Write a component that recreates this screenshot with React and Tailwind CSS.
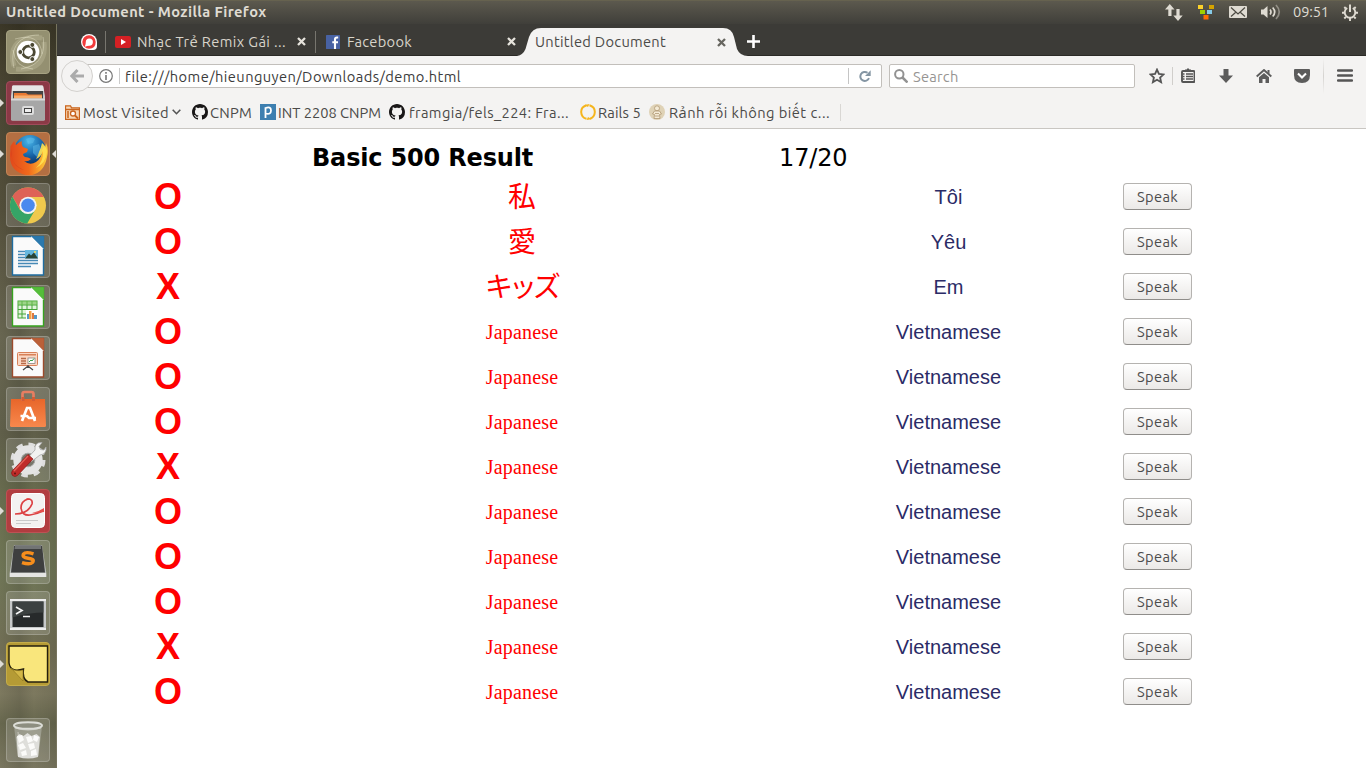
import React, { useLayoutEffect, useRef } from "react";

/* One line of text whose letter spacing is adjusted to fill a given width. */
function Fit({ w, className = "", children }) {
  const ref = useRef(null);
  useLayoutEffect(() => {
    const el = ref.current;
    el.style.letterSpacing = "0px";
    const natural = el.getBoundingClientRect().width;
    const n = Array.from(el.textContent.normalize("NFC")).length;
    el.style.letterSpacing = (w - natural) / n + "px";
  }, [w, children]);
  return (
    <span className={"block shrink-0 whitespace-nowrap " + className} style={{ width: w }}>
      <span ref={ref} className="inline-block">{children}</span>
    </span>
  );
}

const UI = "font-['Ubuntu','Open_Sans','Noto_Sans',sans-serif]";

function TitleBar() {
  return (
    <header className="flex h-6 shrink-0 items-center border-t border-[#66624f] bg-linear-to-b from-[#5c594e] to-[#403f3a] text-[#dfdbd2]">
      <Fit w={260.5} className="ml-1.5 text-[14.67px] font-bold leading-none">Untitled Document - Mozilla Firefox</Fit>
      <svg className="ml-[898.5px] h-[18px] w-[18px] shrink-0" viewBox="0 0 18 18" fill="#dfdbd2">
        <path d="M4.800 0 9.500 5.500H6.500V12H3.300V5.500H0zM13 17 8.300 11.500h3.100V5h3.200v6.500h3.100z" />
      </svg>
      <svg className="ml-[15px] h-[18px] w-4 shrink-0" viewBox="0 0 16 18">
        <rect x="0" y="1" width="5" height="4" fill="#fcd12a" />
        <rect x="11" y="1" width="5" height="4" fill="#d5a300" />
        <rect x="2" y="6" width="5" height="4" fill="#9fd000" />
        <rect x="9" y="6" width="5" height="4" fill="#86cbe8" />
        <rect x="5.500" y="11" width="5" height="4.500" fill="#ff6a00" />
      </svg>
      <svg className="-mt-px ml-[15px] h-3 w-[18px] shrink-0" viewBox="0 0 18 12">
        <rect width="18" height="12" rx="1" fill="#dfdbd2" />
        <path d="M2 1.500 9 8l7-6.500M2 10.500l4.500-4M16 10.500l-4.500-4" fill="none" stroke="#4b4941" strokeWidth="1.200" />
      </svg>
      <svg className="-mt-px ml-3.5 h-4 w-5 shrink-0" viewBox="0 0 20 16" fill="none" stroke="#dfdbd2">
        <path d="M0 5.500h2.500L6.500 2v12l-4-3.500H0z" fill="#dfdbd2" stroke="none" />
        <path d="M9 5.500q2 2.500 0 5M11.700 3.500q4 4.500 0 9" strokeWidth="1.700" />
        <path d="M15 1q6.500 7 0 14" strokeWidth="1.700" opacity=".45" />
      </svg>
      <Fit w={36} className="ml-3 text-[14.67px] leading-none">09:51</Fit>
      <svg className="-mt-px ml-[13px] h-[17px] w-4 shrink-0" viewBox="0 0 16 17" fill="none" stroke="#dfdbd2">
        <path d="M5.200 4a5.300 5.300 0 1 0 5.600 0" strokeWidth="1.900" />
        <path d="M8 .5v7.500" strokeWidth="2" />
        <path d="M0 8.700h2.500M13.500 8.700H16M8 14v3M2.300 14.500l1.600-1.700M13.700 14.500l-1.600-1.700M2.300 3l1.500 1.500M13.700 3l-1.500 1.500" strokeWidth="1.900" />
      </svg>
    </header>
  );
}

/* ---------- Launcher ---------- */

const OfficePage = ({ color, corner, children }) => (
  <svg viewBox="0 0 44 44" className="h-11 w-11">
    <path d="M6.500 2.500h20l11 11.500v27h-31z" fill="#fafafa" stroke={color} strokeWidth="1.400" />
    <path d="M25 2h13v13z" fill={corner} stroke={color} strokeWidth=".4" />
    <path d="M25 2v2l11 11h2z" fill="#fff" opacity=".6" />
    {children}
  </svg>
);

const icons = {
  dash: (
    <svg viewBox="0 0 44 44" className="h-11 w-11">
      <g fill="none" stroke="#e2dfc0" strokeWidth="5" opacity=".22">
        <path d="M8 36C2 16 14 4 36 8M38 12c2 18-6 29-28 27" />
      </g>
      <g fill="none" stroke="#f3f0d8" strokeWidth="1" opacity=".4">
        <path d="M8 38C3 17 14 5 33 5M37 7c3 17-4 29-22 32M9 9Q34 2 36 24M7 20q2 18 20 19" />
      </g>
      <circle cx="22" cy="22" r="11.300" fill="#fff" />
      <circle cx="22.500" cy="22" r="5.800" fill="none" stroke="#4b4833" strokeWidth="2.800" />
      <g fill="#4b4833" stroke="#fff" strokeWidth="1"><circle cx="14.300" cy="22" r="2.500" /><circle cx="26.300" cy="14.900" r="2.500" /><circle cx="26.300" cy="29.100" r="2.500" /></g>
    </svg>
  ),
  files: (
    <svg viewBox="0 0 44 44" className="h-11 w-11">
      <path d="M7 4.500h29q1 0 1.200 1L39 15v23q0 1.500-1.500 1.500h-31Q5 39.500 5 38V15l1-9.500q0-1 1-1z" fill="#c9c9c9" />
      <path d="M7 4.500h29q1 0 1.200 1L38 10H6l.2-4.500z" fill="#e6e6e6" />
      <path d="M7 10h30v8H7z" fill="#444" />
      <path d="M8 12h12l2 1.500h14V19H8z" fill="#e87932" /><path d="M8 14.500h28V19H8z" fill="#f6ad6d" />
      <path d="M5 17.500h34V38q0 1.500-1.500 1.500h-31Q5 39.500 5 38z" fill="#a7a7a7" />
      <path d="M5 17.500h34v2H5z" fill="#d9d9d9" />
      <rect x="16" y="25" width="12" height="9" rx="2" fill="#ddd" /><rect x="18.500" y="27.500" width="7" height="4" fill="#eee" stroke="#444" />
    </svg>
  ),
  firefox: (
    <svg viewBox="0 0 44 44" className="h-11 w-11">
      <defs>
        <radialGradient id="globe" cx=".45" cy=".2" r=".8"><stop stopColor="#48b5e8" /><stop offset=".55" stopColor="#1664a8" /><stop offset="1" stopColor="#0a2656" /></radialGradient>
        <linearGradient id="fox" x1="0" x2="1"><stop stopColor="#e0491c" /><stop offset=".5" stopColor="#f26a1c" /><stop offset="1" stopColor="#fdd13a" /></linearGradient>
      </defs>
      <circle cx="24" cy="19" r="16" fill="url(#globe)" />
      <path d="M20 7q5-3 9 0l-2 4-5 1zM27 14l6-2 3 8-5 5-4-4z" fill="#62bde9" opacity=".5" />
      <path d="M4.500 14Q6 12 8 9l2 4q3-3 6-4-1 3 1 6l5 2-1 3-4 2q0 2 2 3 3 0 6 2-3 3-7 2 6 5 12 1 6-4 6-12l2-4 1 2 1-5q3 6 1 14-3 17-18 18.500Q3 41 4 22z" fill="url(#fox)" />
      <path d="M36 11q-1 5-3 9-1 4-3 7 5-2 7-8 1 10-7 17 10-5 11-16 0-5-5-9z" fill="#ffe052" opacity=".9" />
      <path d="M6 17Q3 32 18 38 9 36 6 26z" fill="#cc3321" opacity=".45" />
    </svg>
  ),
  chrome: (
    <svg viewBox="0 0 44 44" className="h-11 w-11">
      <circle cx="22" cy="22.500" r="18" fill="#efc94d" />
      <path d="M22 4.500A18 18 0 0 0 6.400 13.500l8 13.500L22 14h15.800A18 18 0 0 0 22 4.500z" fill="#de6257" />
      <path d="M6.400 13.500a18 18 0 0 0 14.800 27L29 27l-7 4-8-4z" fill="#36a467" />
      <circle cx="22" cy="22.300" r="8.600" fill="#f3f3f3" /><circle cx="22" cy="22.300" r="6.800" fill="#4a89ee" />
    </svg>
  ),
  writer: (
    <OfficePage color="#1e6ca0" corner="#2b79ad">
      <path d="M12 17.500h7M12 20.500h7M12 23.500h7M12 26.500h20M12 29.500h20M12 32.500h13" stroke="#4689b6" strokeWidth="1.500" />
      <rect x="19" y="16" width="13" height="8.500" fill="#65b7de" /><path d="m19 24.500 4-5 2 2 3-3 4 6z" fill="#294537" /><circle cx="29" cy="18" r="1" fill="#ffe35b" />
    </OfficePage>
  ),
  calc: (
    <OfficePage color="#36a31e" corner="#55bd3a">
      <rect x="12" y="16" width="19" height="17" fill="#e2f4dc" stroke="#45a438" />
      <path d="M12 20h19M12 24.500h19M12 29h19M16 16v17M21 16v17M26 16v17" stroke="#45a438" /><path d="M12 16h19v4H12z" fill="#6fc052" opacity=".6" />
      <path d="M20 25h12v9H20z" fill="#fff" /><path d="M21 29h2v5h-2zM28 30h3v4h-3z" fill="#5599c7" /><path d="M23 26h2.500v8H23z" fill="#f4a147" /><path d="M26 28h2v6h-2z" fill="#de7940" />
    </OfficePage>
  ),
  impress: (
    <OfficePage color="#9c4a2b" corner="#bb6038">
      <rect x="11.500" y="16.500" width="20" height="13" rx="1" fill="#fbd7c3" stroke="#d88158" />
      <path d="M13 18.800h17" stroke="#d88158" strokeWidth="1.500" /><path d="M15 22.500h5M15 25h5M15 27.500h5" stroke="#b76a48" strokeWidth="1.500" />
      <rect x="22" y="22" width="7" height="5.500" fill="#fff" stroke="#777" strokeWidth=".7" /><path d="m23 26 2-2 1 1 2-2.500" stroke="#37a348" fill="none" />
      <path d="m17 34 5-4 5 4M22 29v3" stroke="#484848" strokeWidth="1.300" fill="none" />
    </OfficePage>
  ),
  store: (
    <svg viewBox="0 0 44 44" className="h-11 w-11">
      <defs><linearGradient id="bag" x2="0" y2="1"><stop stopColor="#e8662a" /><stop offset="1" stopColor="#f7884d" /></linearGradient></defs>
      <path d="M5 12h34l1 26.500q0 1.500-1.500 1.500h-33Q4 40 4 38.500z" fill="url(#bag)" />
      <path d="M16.500 14V7q0-2 2-2h7q2 0 2 2v7" fill="none" stroke="#e77e61" strokeWidth="2.700" />
      <path d="M15.500 10h3v4h-3zM26 10h3v4h-3z" fill="#d25d35" />
      <path d="m16 34 5-13h3l5 13M14.500 29H21l2 2h7" fill="none" stroke="#fff" strokeWidth="2.700" />
    </svg>
  ),
  settings: (
    <svg viewBox="0 0 44 44" className="h-11 w-11">
      <circle cx="22" cy="22" r="15" fill="none" stroke="#dedede" strokeWidth="5" strokeDasharray="6.200 5.580" />
      <circle cx="22" cy="22" r="10.700" fill="none" stroke="#e4e4e4" strokeWidth="8" />
      <circle cx="22" cy="22" r="6.800" fill="#77766a" stroke="#aaa" />
      <path d="M22 19.500 29 12q-1-8 7-7.500l-3 4 1.500 3 3.500.5 2-3q1 7-6 8l-8.500 6.500z" fill="#f2f2f2" stroke="#a7a7a7" strokeWidth=".8" />
      <path d="M22 16.500 27 21 11.500 37.500q-2.500 2-5 0-2-2.500 0-5z" fill="#bf2b29" stroke="#8d1717" strokeWidth=".7" /><path d="M22 18 8 33" stroke="#e26258" strokeWidth="1.300" />
      <circle cx="9" cy="35.500" r="1" fill="#5d1514" />
    </svg>
  ),
  reader: (
    <svg viewBox="0 0 44 44" className="h-11 w-11">
      <rect x="5.500" y="4.500" width="33" height="34" rx="4" fill="#f3f2f1" stroke="#fff" />
      <path d="M9 25q13 0 17-10 1-5-4-5-7 2-7 9 1 8 9 7 7-1 14-4.500" fill="none" stroke="#dc4143" strokeWidth="1.700" />
      <path d="M17 13q4-6 8-3-5-1-8 3zM26 24q6-1 12-5v4q-6 1-12 1z" fill="#e6504d" />
      <path d="M10 31.500h22M10 34.500h15" stroke="#c9c9c9" strokeWidth="1" />
    </svg>
  ),
  sublime: (
    <svg viewBox="0 0 44 44" className="h-11 w-11">
      <path d="M8 5h28l4.500 29v3H3.500v-3z" fill="#b9bcb9" /><path d="M4 33h36v4H4z" fill="#e5e5e3" />
      <path d="M9 5.500h26q1 0 1.200 1.200L39 32.500H5L7.800 6.700Q8 5.500 9 5.500z" fill="#3e3f3f" /><path d="M9 6h26v3H8.500z" fill="#727474" />
      <path d="M27.500 13.800q-8-2.500-10 .2-1.700 3.500 4.500 4.200 7 .8 4.500 4.200-2.500 2.700-10.500.2" fill="none" stroke="#f68d1c" strokeWidth="3.500" />
    </svg>
  ),
  terminal: (
    <svg viewBox="0 0 44 44" className="h-11 w-11">
      <path d="M4 8h36v31H4z" fill="#c6c8c9" /><path d="M4 8h36v2H4zM4 37h36v2H4z" fill="#ededed" />
      <path d="M6.500 10.500h31V36h-31z" fill="#272a2b" /><path d="M6.500 10.500h31v11q-14 0-31 5z" fill="#444949" opacity=".75" />
      <path d="m10 16 6 3.500-6 3.500M17 25.500h7" fill="none" stroke="#f4f4f4" strokeWidth="1.700" />
    </svg>
  ),
  notes: (
    <svg viewBox="0 0 44 44" className="h-11 w-11">
      <path d="M3 4h38v36H21q-4-3-4-13l-7 1q-6 0-7-8z" fill="#f9e67c" />
      <path d="M3 4h38.500v36H22q-6-3-4.500-13-13 4-14.500-6z" fill="none" stroke="#241f0e" strokeWidth="1.400" />
      <path d="M5 26 17 39V28q-8 2-12-2z" fill="#d3b747" stroke="#8a731c" strokeWidth=".6" />
    </svg>
  ),
  trash: (
    <svg viewBox="0 0 44 44" className="h-11 w-11">
      <path d="m8 8 3.500 30q10.500 3 21 0L36 8z" fill="#c4c6bc" opacity=".45" />
      <path d="m10.500 19 3-3 4 2 4-3 4 3 5-2 3.500 3-2 20q-10 3-20 0z" fill="#dededa" />
      <path d="m11 18 5-1 2 5-5 3zm9 1 5-1 2 5-5 2zm8-2 5 2-2 5-4-2zM12 27l5-2 3 5-6 2zm10-1 6-1 1 5-5 2zm-7 8 5-2 1 5-5 1zm10-1 5-2 1 6-6 1z" fill="#fbfbf9" />
      <ellipse cx="22" cy="7.500" rx="14" ry="3.300" fill="#8d8e80" stroke="#dcddd7" strokeWidth="1.900" />
      <path d="M9 10q13 4 26 0" stroke="#dcddd7" fill="none" opacity=".7" />
      <path d="M12 14 14 35" stroke="#f4f4ef" opacity=".5" />
    </svg>
  ),
};

const GLASS = "border-white/20 bg-white/15";
const launcherItems = [
  { id: "dash", tile: "border-[#a6a282] bg-[#949071]" },
  { id: "files", tile: "border-[#a04b5b] bg-[#8b3946]", left: true },
  { id: "firefox", tile: "border-[#c28557] bg-[#b36f42]", left: true, right: true },
  { id: "chrome", tile: GLASS },
  { id: "writer", tile: GLASS },
  { id: "calc", tile: GLASS },
  { id: "impress", tile: GLASS },
  { id: "store", tile: GLASS },
  { id: "settings", tile: GLASS },
  { id: "reader", tile: "border-[#bd5255] bg-[#b13d40]", left: true },
  { id: "sublime", tile: GLASS },
  { id: "terminal", tile: GLASS },
  { id: "notes", tile: "border-[#c5ad4a] bg-[#b59b35]", left: true },
];

function Tile({ id, tile, left, right }) {
  return (
    <div className="relative flex h-11 w-full shrink-0 pl-1.5">
      <div className={"flex h-11 w-11 shrink-0 items-center justify-center overflow-hidden rounded-[4px] border " + tile}>
        <span className="h-11 w-11 shrink-0">{icons[id]}</span>
      </div>
      {left && <svg className="absolute top-[18px] left-0 h-2 w-1" viewBox="0 0 4 8"><path d="M0 0 4 4 0 8z" fill="#dedcd6" /></svg>}
      {right && <svg className="absolute top-[18px] right-0 h-2 w-1" viewBox="0 0 4 8"><path d="M4 0 0 4l4 4z" fill="#dedcd6" /></svg>}
    </div>
  );
}

function Launcher() {
  return (
    <nav className="flex w-[57px] shrink-0 flex-col gap-[7px] border-r border-[#77745e] bg-[linear-gradient(90deg,transparent_0%,rgba(0,0,0,0.10)_35%,transparent_60%,rgba(0,0,0,0.08)_100%),linear-gradient(180deg,#3b3727_0%,#494532_8%,#534f3b_25%,#686651_42%,#605f4a_55%,#6b7050_66%,#6f7556_74%,#716e55_84%,#7d795f_90%,#67674e_94%,#7a7760_100%)] pt-1.5 pb-1.5">
      {launcherItems.map((item) => <Tile key={item.id} {...item} />)}
      <div className="mt-auto"><Tile id="trash" tile={GLASS} /></div>
    </nav>
  );
}

/* ---------- Browser chrome ---------- */

const CloseX = ({ className, color }) => (
  <svg className={"h-[9px] w-[9px] shrink-0 " + className} viewBox="0 0 9 9"><path d="m1 1 7 7M8 1 1 8" stroke={color} strokeWidth="2.300" /></svg>
);

function TabBar() {
  return (
    <div className="flex h-8 shrink-0 items-center border-b border-[#2b2a26] bg-[#3c3b37] pt-1 text-[14.67px] leading-none text-[#d8d4ca]">
      <svg className="mt-[1px] ml-6 h-4 w-4 shrink-0" viewBox="0 0 16 16">
        <path d="M8 0a8 8 0 0 1 8 8v4q0 4-4 4H8A8 8 0 0 1 8 0z" fill="#fff" />
        <path d="M8 1.300A6.700 6.700 0 0 1 14.700 8q0 6.700-6.700 6.700A6.700 6.700 0 0 1 8 1.300z" fill="#f23b3b" />
        <path d="M8.300 4.500a3.600 3.600 0 0 1 0 7.200q-2 0-4.500 1 1-2 1-4.600a3.600 3.600 0 0 1 3.500-3.600z" fill="#fff" />
      </svg>
      <div className="ml-2 h-[22px] w-px shrink-0 bg-[#77756e]" />
      <svg className="ml-[9px] h-3 w-4 shrink-0" viewBox="0 0 16 12"><rect width="16" height="12" rx="2" fill="#d52024" /><path d="m6 3 5 3-5 3z" fill="#fff" /></svg>
      <Fit w={149} className="ml-1.5 pt-px">Nhạc Trẻ Remix Gái ...</Fit>
      <CloseX className="ml-[10.5px]" color="#e6e3dc" />
      <div className="ml-[9.5px] h-[22px] w-px shrink-0 bg-[#77756e]" />
      <svg className="ml-2.5 h-3.5 w-3.5 shrink-0" viewBox="0 0 14 14"><rect width="14" height="14" rx=".5" fill="#4862a3" /><path d="M12.200 2.500H11q-2 0-2 2V14M6.300 7.300H12" stroke="#fff" strokeWidth="2.100" fill="none" /></svg>
      <Fit w={65} className="ml-[7px] pt-px">Facebook</Fit>
      <CloseX className="ml-[94.500px]" color="#e6e3dc" />
      <div className="relative -mt-1 ml-[1.5px] flex h-8 w-[230px] shrink-0 items-center self-start pt-[5px] pl-[18px] text-[#4b4a47]">
        <svg className="absolute inset-0 h-8 w-[231px]" viewBox="0 0 231 32"><path d="M0 32q6-1 8.500-7L12 13q3-9 12-9h182q9 0 11 9l3 12q3 7 11 7z" fill="#f4f3f2" /></svg>
        <Fit w={131} className="relative">Untitled Document</Fit>
        <CloseX className="relative ml-[50.5px]" color="#66655f" />
      </div>
      <svg className="h-[13px] w-[13px] shrink-0" viewBox="0 0 13 13"><path d="M6.500 0v13M0 6.500h13" stroke="#fff" strokeWidth="2.600" /></svg>
    </div>
  );
}

function NavBar() {
  return (
    <div className="flex h-10 shrink-0 items-center text-[14.67px] leading-none">
      <div className="z-10 ml-1 flex h-8 w-8 shrink-0 items-center justify-center rounded-full border border-[#d3d1ce] bg-[#f4f3f2]">
        <svg className="h-3.5 w-3.5" viewBox="0 0 14 14"><path d="M7.500 1 1.800 7l5.700 6M2 7h12" fill="none" stroke="#ababab" strokeWidth="3" /></svg>
      </div>
      <div className="-ml-3 flex h-6 w-[801px] shrink-0 items-center rounded-[2px] border border-[#c2bfbb] bg-white">
        <svg className="ml-[17px] h-3.5 w-3.5 shrink-0" viewBox="0 0 14 14" fill="none" stroke="#777"><circle cx="7" cy="7" r="6.300" strokeWidth="1.200" /><path d="M7 6v5M7 3v1.700" strokeWidth="1.600" /></svg>
        <div className="ml-[6px] h-4 w-px bg-[#cbcbcb]" />
        <Fit w={335.500} className="ml-[5px] pt-[2px] text-[#3b3b3b]">file:///home/hieunguyen/Downloads/demo.html</Fit>
        <div className="ml-[387.500px] h-4 w-px bg-[#c5c5c5]" />
        <svg className="ml-2.5 h-3 w-3 shrink-0" viewBox="0 0 12 12"><path d="M10 8.200A4.500 4.500 0 1 1 8.500 2.800" fill="none" stroke="#8495a3" strokeWidth="2" /><path d="M11.700.2V6H6z" fill="#8495a3" /></svg>
      </div>
      <div className="ml-[7px] flex h-6 w-[246px] shrink-0 items-center rounded-[2px] border border-[#c2bfbb] bg-white">
        <svg className="ml-1 h-3.5 w-3.5 shrink-0" viewBox="0 0 14 14" fill="none" stroke="#929292"><circle cx="5.300" cy="5.300" r="4.200" strokeWidth="2" /><path d="m8.500 8.500 5 5" strokeWidth="2.500" /></svg>
        <Fit w={45.500} className="ml-[5px] pt-[2px] text-[#969492]">Search</Fit>
      </div>
      <svg className="ml-3.5 h-4 w-4 shrink-0" viewBox="0 0 16 16"><path d="m8 1.600 1.900 4.300 4.700.5-3.500 3.100 1 4.700L8 11.800l-4.100 2.400 1-4.700-3.500-3.100 4.700-.5z" fill="none" stroke="#555" strokeWidth="1.800" /></svg>
      <div className="ml-[7px] h-[18px] w-px bg-[#d0cecb]" />
      <svg className="-mt-px ml-2 h-[15px] w-3.5 shrink-0" viewBox="0 0 14 15"><path d="M4 2.500V1.500h1.500L7 0l1.500 1.500H10v1" fill="#555" /><rect x="1" y="3" width="12.500" height="11" rx="1" fill="#f4f3f2" stroke="#555" strokeWidth="1.900" /><path d="M2 6h1.500M5 6h7M2 8.500h1.500M5 8.500h7M2 11h1.500M5 11h7" stroke="#555" strokeWidth="1.300" /></svg>
      <svg className="ml-6 h-3.5 w-3.5 shrink-0" viewBox="0 0 14 14"><path d="M4.500 0h5v6.500H14L7 14 0 6.500h4.500z" fill="#5c5c5c" /></svg>
      <svg className="ml-[23px] h-3.5 w-4 shrink-0" viewBox="0 0 16 14"><path d="M.7 7.500 8 1l7.300 6.500" fill="none" stroke="#5c5c5c" strokeWidth="1.900" /><path d="M3 8.200 8 4l5 4.200V14H9.500v-4h-3v4H3zM11.500 1h2v4l-2-2z" fill="#5c5c5c" /></svg>
      <svg className="ml-[22px] h-3.5 w-4 shrink-0" viewBox="0 0 16 14"><path d="M1 0h14q1 0 1 1v5q0 8-8 8T0 6V1q0-1 1-1z" fill="#5c5c5c" /><path d="m4 4.500 4 4 4-4" fill="none" stroke="#fff" strokeWidth="2.100" /></svg>
      <div className="ml-[13px] h-9 w-px bg-linear-to-b from-transparent via-[#d5d3d0] to-transparent" />
      <svg className="-mt-px ml-[13px] h-[13px] w-4 shrink-0" viewBox="0 0 16 13"><path d="M1 1.500h14M1 6.500h14M1 11.500h14" stroke="#555" strokeWidth="2.400" strokeLinecap="round" /></svg>
    </div>
  );
}

const GitHubMark = ({ className }) => (
  <svg className={"h-4 w-4 shrink-0 " + className} viewBox="0 0 16 16"><path fill="#191717" d="M8 0C3.580 0 0 3.580 0 8c0 3.540 2.290 6.530 5.470 7.590.4.070.55-.17.55-.38 0-.19-.01-.82-.01-1.490-2.010.37-2.530-.49-2.690-.94-.09-.23-.48-.94-.82-1.130-.28-.15-.68-.52-.01-.53.63-.01 1.080.58 1.230.82.72 1.210 1.870.87 2.330.66.070-.52.28-.87.51-1.070-1.780-.2-3.640-.89-3.640-3.950 0-.87.31-1.590.82-2.150-.08-.2-.36-1.020.08-2.120 0 0 .67-.21 2.200.82.64-.18 1.320-.27 2-.27s1.360.09 2 .27c1.530-1.040 2.200-.82 2.200-.82.44 1.100.16 1.920.08 2.120.51.56.82 1.270.82 2.150 0 3.070-1.870 3.750-3.650 3.950.29.25.54.73.54 1.480 0 1.070-.01 1.930-.01 2.200 0 .21.15.46.55.38A8.010 8.010 0 0 0 16 8c0-4.420-3.580-8-8-8z" /></svg>
);

function Bookmarks() {
  return (
    <div className="flex h-8 shrink-0 items-center text-[14.67px] leading-none text-[#4b4a48]">
      <svg className="ml-2 h-[15px] w-[15px] shrink-0" viewBox="0 0 15 15"><path d="M.5.800h5l1 2h8v11.700H.5z" fill="#f7d8b7" stroke="#c9641d" strokeWidth="1.300" /><path d="M1 4.500h13M3 6v7" stroke="#c9641d" strokeWidth="1.500" /><circle cx="8" cy="8.500" r="2.500" fill="#fff" stroke="#c9641d" strokeWidth="1.300" /><path d="m10 10.500 3 3" stroke="#c9641d" strokeWidth="1.800" /></svg>
      <Fit w={86} className="ml-[3px] pt-[2px]">Most Visited</Fit>
      <svg className="ml-[3px] h-[6px] w-[9px] shrink-0" viewBox="0 0 9 6"><path d="m.7.700 3.800 4 3.800-4" fill="none" stroke="#555" strokeWidth="1.600" /></svg>
      <GitHubMark className="ml-[11px]" />
      <Fit w={42} className="ml-[2px] pt-[2px]">CNPM</Fit>
      <svg className="ml-2 h-4 w-4 shrink-0" viewBox="0 0 16 16"><rect width="16" height="16" fill="#3d7fb0" /><path d="M5.500 14V4q5.500-2 5.500 2.500T5.500 9.500" fill="none" stroke="#fff" strokeWidth="1.800" /></svg>
      <Fit w={103} className="ml-[2px] pt-[2px]">INT 2208 CNPM</Fit>
      <GitHubMark className="ml-2" />
      <Fit w={160} className="ml-1 pt-[2px]">framgia/fels_224: Fra...</Fit>
      <svg className="ml-[11px] h-4 w-4 shrink-0" viewBox="0 0 16 16"><path d="M6.500 1.300Q1 3 1.200 8.200 1.500 13.500 6.500 14.800M9.500 1.300Q15 3 14.800 8.200 14.500 13 10 14.700" fill="none" stroke="#f5b51e" strokeWidth="2" /><path d="M4.500 1 9.500 0 8 3zM11.500 15.300 6.500 16 8 13z" fill="#f5b51e" /></svg>
      <Fit w={43} className="ml-[2px] pt-[2px]">Rails 5</Fit>
      <svg className="ml-2 h-4 w-4 shrink-0" viewBox="0 0 16 16"><circle cx="8" cy="8" r="8" fill="#dfd2b6" /><g fill="#f4ead5" stroke="#b09874" strokeWidth=".8"><circle cx="8" cy="4.300" r="2.500" /><path d="M5.500 7h5l2 3-2 .5.5 4H5l.5-4-2-.5z" /><path d="M6 9.500h4M6 12h4" /></g></svg>
      <Fit w={161} className="ml-1 pt-[2px]">Rảnh rỗi không biết c...</Fit>
      <div className="ml-2.5 h-[17px] w-px bg-[#d9d7d4]" />
    </div>
  );
}

/* ---------- Page ---------- */

const rows = [
  ["O", "私", "Tôi"],
  ["O", "愛", "Yêu"],
  ["X", "キッズ", "Em"],
  ...["O", "O", "O", "X", "O", "O", "O", "X", "O"].map((m) => [m, "Japanese", "Vietnamese"]),
];

function Japanese({ text }) {
  if (text === "Japanese") {
    return (
      <span className="flex justify-center pt-[2px] font-['Liberation_Serif',serif] text-[20px] leading-[45px] text-[#f00]">
        <Fit w={72.500}>{text}</Fit>
      </span>
    );
  }
  return (
    <span className="flex h-[45px] justify-center font-['Noto_Sans_CJK_JP',sans-serif] text-[28px] leading-[43px] text-[#f00]">
      {text.length > 1 ? <Fit w={72} className="-ml-0.5 leading-[42px]">{text}</Fit> : text}
    </span>
  );
}

function Page() {
  return (
    <main className="flex flex-1 flex-col overflow-hidden bg-white">
      <div className="flex h-11 shrink-0 items-center pt-[13px] font-['DejaVu_Sans',sans-serif] text-[24px] leading-none text-black">
        <h1 className="ml-[255px] w-[467px] font-bold"><Fit w={221}>Basic 500 Result</Fit></h1>
        <Fit w={68.500}>17/20</Fit>
      </div>
      {rows.map(([mark, jp, vi], i) => (
        <div key={i} className="grid h-[45px] shrink-0 grid-cols-[222px_486px_366px_53px] items-center text-center">
          <span className="font-['Liberation_Sans',Arial,sans-serif] text-[36px] leading-[45px] font-bold text-[#f00]">{mark}</span>
          <Japanese text={jp} />
          <span className="pt-[2px] pl-px font-['Liberation_Sans',Arial,sans-serif] text-[20px] leading-[45px] text-[#2b2b66]">{vi}</span>
          <button className="-ml-2 flex h-[27px] w-[69px] items-center justify-center rounded-[4px] border border-[#b5b3b0] border-b-[#8f8d8a] bg-linear-to-b from-white to-[#ebe9e7] pt-px text-[14.67px] leading-none text-[#4c4c4c]">
            <Fit w={41}>Speak</Fit>
          </button>
        </div>
      ))}
    </main>
  );
}

export default function App() {
  return (
    <div className={"flex h-[768px] w-[1366px] flex-col overflow-hidden bg-white " + UI}>
      <TitleBar />
      <div className="flex min-h-0 flex-1">
        <Launcher />
        <div className="flex min-w-0 flex-1 flex-col">
          <TabBar />
          <div className="flex h-[73px] shrink-0 flex-col border-b border-[#c9c6c2] bg-[#f4f3f2]">
            <NavBar />
            <Bookmarks />
          </div>
          <Page />
        </div>
      </div>
    </div>
  );
}
